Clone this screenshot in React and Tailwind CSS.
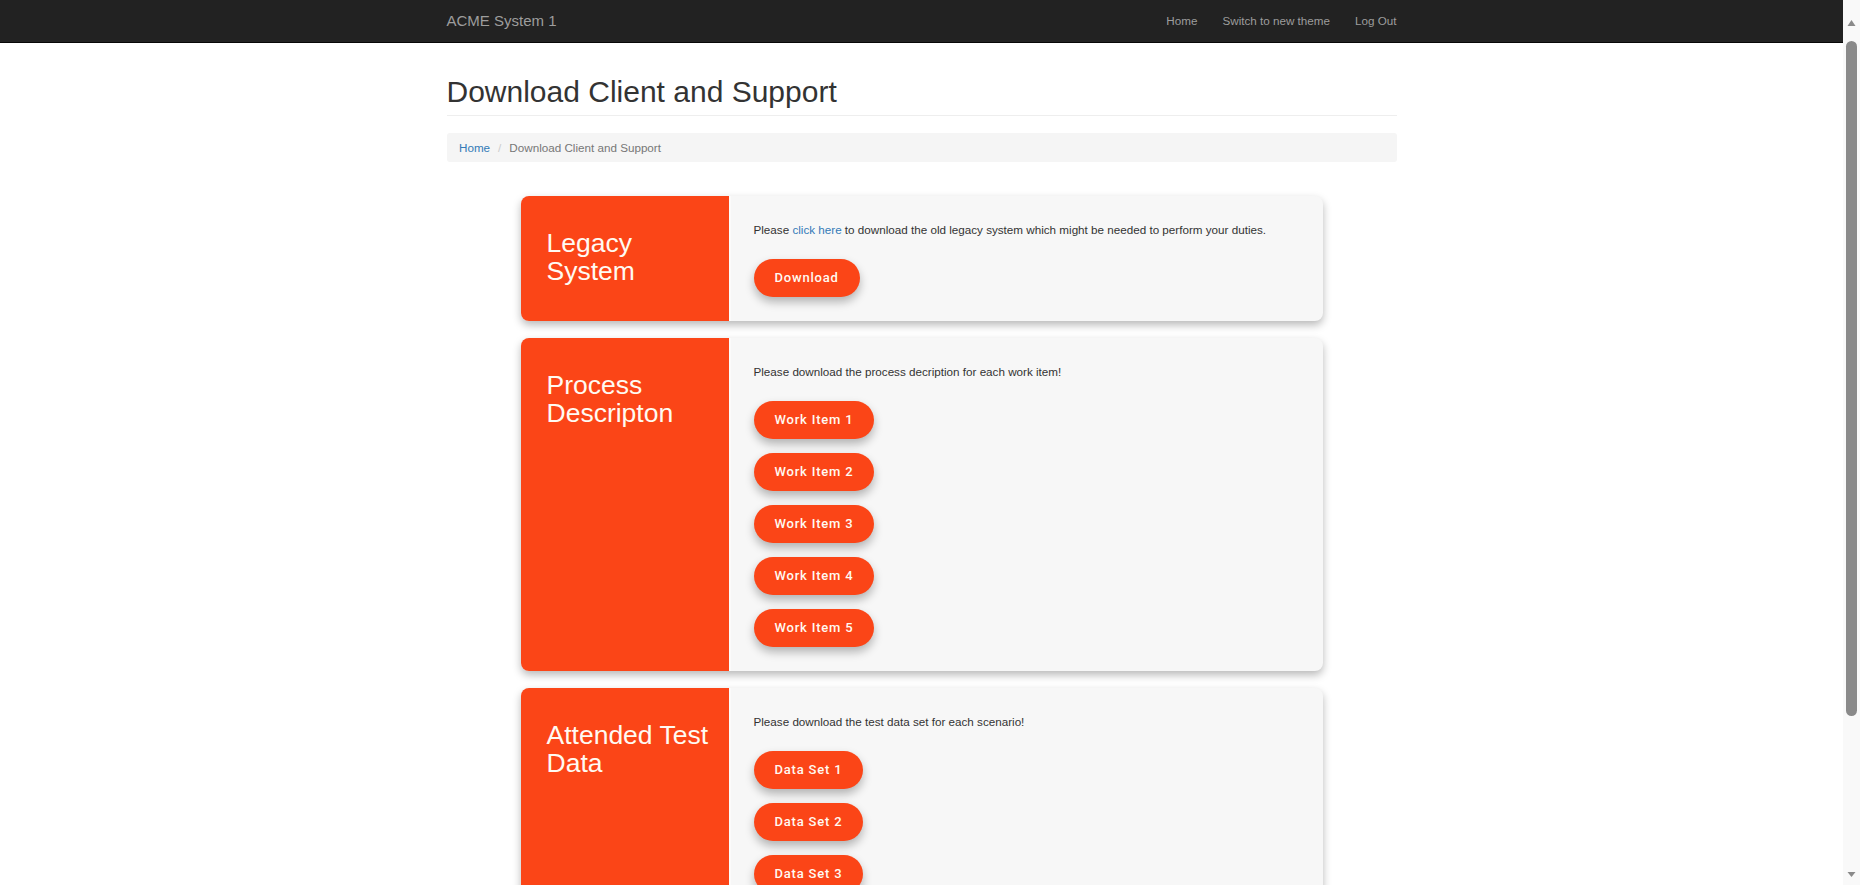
import React from "react";

const ORANGE = "bg-[#fb4517]";

const sections = [
  {
    title: ["Legacy", "System"],
    intro: (
      <>
        Please <a href="#" className="text-[#337ab7]">click here</a> to download
        the old legacy system which might be needed to perform your duties.
      </>
    ),
    buttons: ["Download"],
  },
  {
    title: ["Process", "Descripton"],
    intro: "Please download the process decription for each work item!",
    buttons: ["Work Item 1", "Work Item 2", "Work Item 3", "Work Item 4", "Work Item 5"],
  },
  {
    title: ["Attended Test", "Data"],
    intro: "Please download the test data set for each scenario!",
    buttons: ["Data Set 1", "Data Set 2", "Data Set 3", "Data Set 4", "Data Set 5"],
  },
];

const PillButton = ({ label }) => (
  <button
    type="button"
    className={`${ORANGE} h-[38px] px-[21px] rounded-full text-[#fffaf2] font-['Roboto',Arial,sans-serif] font-medium text-[13px] tracking-[0.8px] shadow-[0_5px_10px_rgba(0,0,0,0.28)]`}
  >
    {label}
  </button>
);

const SectionCard = ({ section }) => (
  <div className="flex rounded-lg bg-[#f7f7f7] shadow-[0_4px_8px_rgba(0,0,0,0.28)]">
    <div className={`${ORANGE} w-[208px] shrink-0 rounded-l-lg pt-[33px] pl-[26px] pr-[10px]`}>
      <h2 className="text-[26.5px] leading-[28px] text-[#fffaf2] whitespace-nowrap">
        {section.title[0]}
        <br />
        {section.title[1]}
      </h2>
    </div>
    <div className="flex-1 pt-[25px] pl-[23px] pb-[24px] border-l-2 border-[#fbfbfb]">
      <p className="leading-[17px]">{section.intro}</p>
      <div className="mt-[21px] flex flex-col items-start gap-[14px]">
        {section.buttons.map((b) => (
          <PillButton key={b} label={b} />
        ))}
      </div>
    </div>
  </div>
);

// classic browser scrollbar, as seen at the right edge of the window
const ScrollbarStrip = () => (
  <div className="fixed top-0 right-0 h-screen w-[17px] bg-[#f9f9f9] flex flex-col items-center">
    <svg width="17" height="30" viewBox="0 0 17 30" className="shrink-0">
      <path d="M4.5 26 L8.5 20 L12.5 26 Z" fill="#8a8a8a" />
    </svg>
    <div className="flex-1 w-full px-[3px] pt-[11px] pb-[150px]">
      <div className="h-full w-full rounded-full bg-[#8a8a8a]" />
    </div>
    <svg width="17" height="19" viewBox="0 0 17 19" className="shrink-0">
      <path d="M4.5 6 L8.5 11 L12.5 6 Z" fill="#8a8a8a" />
    </svg>
  </div>
);

export default function App() {
  return (
    <div className="min-h-screen bg-white pr-[17px] font-['Liberation_Sans',Arial,sans-serif] text-[11.67px] text-[#333]">
      {/* Navbar */}
      <nav className="h-[43px] bg-[#222] border-b border-[#080808]">
        <div className="mx-auto w-[950px] h-full flex items-center justify-between">
          <a href="#" className="text-[15px] text-[#9d9d9d]">
            ACME System 1
          </a>
          <ul className="flex gap-[25px] text-[11.67px] text-[#9d9d9d]">
            <li><a href="#">Home</a></li>
            <li><a href="#">Switch to new theme</a></li>
            <li><a href="#">Log Out</a></li>
          </ul>
        </div>
      </nav>

      <main className="mx-auto w-[950px]">
        {/* Page header */}
        <div className="mt-[32px] pb-[7px] border-b border-[#eee]">
          <h1 className="text-[30px] leading-[33px] text-[#333]">Download Client and Support</h1>
        </div>

        {/* Breadcrumb */}
        <ol className="mt-[17px] h-[29px] px-[12.5px] bg-[#f5f5f5] rounded-[3px] flex items-center">
          <li>
            <a href="#" className="text-[#337ab7]">Home</a>
          </li>
          <li className="text-[#ccc] pl-[8px] pr-[8px]">/</li>
          <li className="text-[#777]">Download Client and Support</li>
        </ol>

        {/* Sections */}
        <div className="mt-[34px] mx-auto w-[802px] flex flex-col gap-[17px]">
          {sections.map((s) => (
            <SectionCard key={s.title.join(" ")} section={s} />
          ))}
        </div>

        <hr className="mt-[20px] border-[#eee]" />
        <footer className="py-[12px]">
          <p>&copy; 2024 - ACME System 1</p>
        </footer>
      </main>

      <ScrollbarStrip />
    </div>
  );
}
